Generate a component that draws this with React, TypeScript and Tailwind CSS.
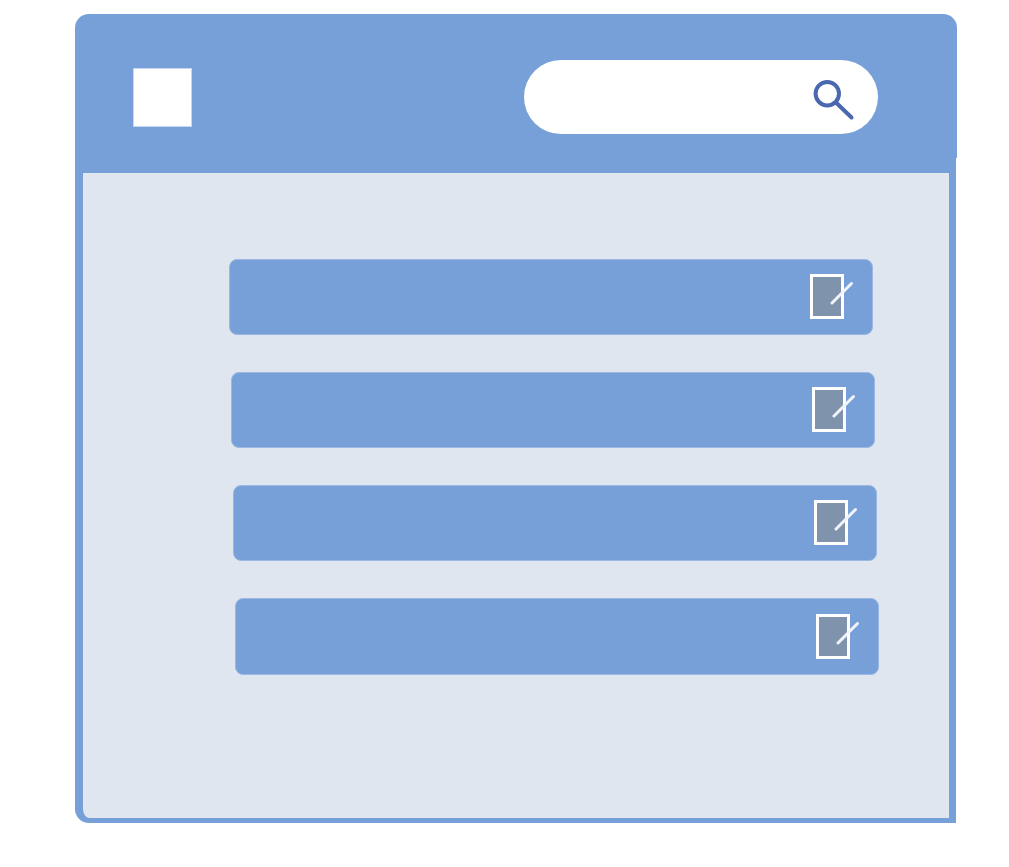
const rows = [
  "ml-[146px] mb-[37px] h-[76px]",
  "ml-[148px] mb-[37px] h-[76px]",
  "ml-[150px] mb-[37px] h-[76px]",
  "ml-[152px] h-[77px]",
];

function Row({ className }: { className: string }) {
  return (
    <div className={`${className} w-[644px] flex items-center justify-end pr-[20px] bg-[#78a0d8] border border-[#9ab8e3] rounded-[8px]`}>
      <div className="relative w-[42px] h-[45px] mb-[1px]">
        <div className="w-[34px] h-[45px] bg-[#7f93ad] border-[3px] border-white" />
        <svg className="absolute left-[20px] top-[7px]" width="24" height="24" viewBox="0 0 24 24" fill="none">
          <path d="M2 22 L21.5 2.5" stroke="#f1f4fa" strokeWidth="3" strokeLinecap="round" />
        </svg>
      </div>
    </div>
  );
}

export default function App() {
  return (
    <div className="w-[1009px] h-[867px] bg-white pt-[14px] pl-[75px] overflow-hidden">
      <div className="w-[882px] h-[809px] flex flex-col">
        <header className="h-[144px] shrink-0 bg-[#78a0d8] rounded-t-[14px] flex items-center justify-between pl-[58px] pr-[79px] pt-[22px]">
          <div className="w-[59px] h-[59px] mt-[1px] bg-white border border-[#c5d6f0]" />
          <div className="w-[354px] h-[74px] bg-white rounded-full flex items-center justify-end pr-[22px]">
            <svg width="46" height="46" viewBox="0 0 46 46" fill="none" className="mt-[2px]">
              <circle cx="17.3" cy="18.7" r="11.7" stroke="#4a68b0" strokeWidth="4" />
              <path d="M26 27.5 L41.5 42.5" stroke="#4a68b0" strokeWidth="4" strokeLinecap="round" />
            </svg>
          </div>
        </header>
        <div className="flex-1 mr-[1px] bg-[#dfe6ef] border-t-[15px] border-l-[8px] border-r-[7px] border-b-[5px] border-[#78a0d8] rounded-bl-[14px] pt-[86px]">
          {rows.map((c) => (
            <Row key={c} className={c} />
          ))}
        </div>
      </div>
    </div>
  );
}
